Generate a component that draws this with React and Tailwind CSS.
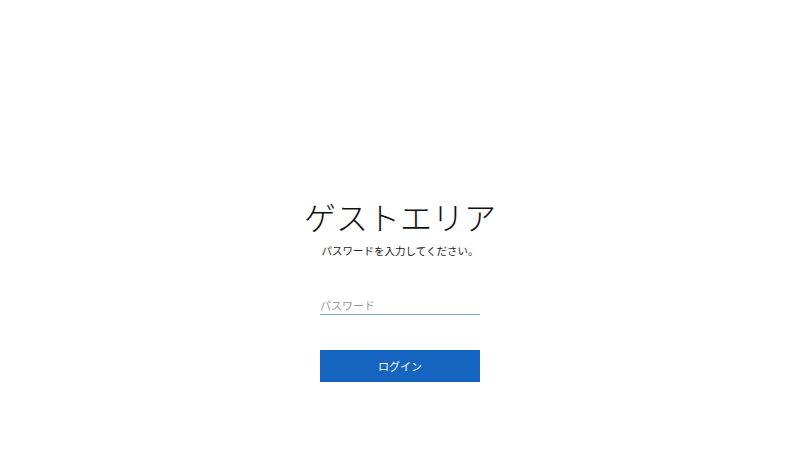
export default function App() {
  return (
    <div
      className="w-[800px] h-[450px] bg-white flex flex-col items-center pt-[196px]"
      style={{ fontFamily: '"Noto Sans CJK JP", "Noto Sans", sans-serif' }}
    >
      <h1 className="text-[32px] leading-[40px] font-light text-[#111]">ゲストエリア</h1>
      <p className="text-[10.5px] leading-[16px] mt-[7px] text-[#222]">パスワードを入力してください。</p>
      <div className="w-[160px] mt-[37px] border-b border-[#7ca3da]">
        <input
          type="password"
          placeholder="パスワード"
          className="block w-full h-[18px] text-[11px] leading-[18px] outline-none placeholder:text-[#9a9a9a] bg-transparent"
        />
      </div>
      <button className="w-[160px] h-[32px] mt-[35px] bg-[#1565c0] text-white text-[11px]">ログイン</button>
    </div>
  );
}
